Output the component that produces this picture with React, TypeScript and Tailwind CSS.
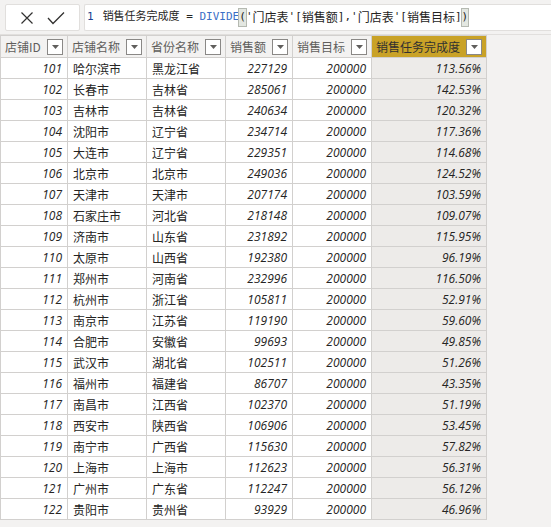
import React from "react";

const rows: [number, string, string, number, string][] = [
  [101, "哈尔滨市", "黑龙江省", 227129, "113.56%"],
  [102, "长春市", "吉林省", 285061, "142.53%"],
  [103, "吉林市", "吉林省", 240634, "120.32%"],
  [104, "沈阳市", "辽宁省", 234714, "117.36%"],
  [105, "大连市", "辽宁省", 229351, "114.68%"],
  [106, "北京市", "北京市", 249036, "124.52%"],
  [107, "天津市", "天津市", 207174, "103.59%"],
  [108, "石家庄市", "河北省", 218148, "109.07%"],
  [109, "济南市", "山东省", 231892, "115.95%"],
  [110, "太原市", "山西省", 192380, "96.19%"],
  [111, "郑州市", "河南省", 232996, "116.50%"],
  [112, "杭州市", "浙江省", 105811, "52.91%"],
  [113, "南京市", "江苏省", 119190, "59.60%"],
  [114, "合肥市", "安徽省", 99693, "49.85%"],
  [115, "武汉市", "湖北省", 102511, "51.26%"],
  [116, "福州市", "福建省", 86707, "43.35%"],
  [117, "南昌市", "江西省", 102370, "51.19%"],
  [118, "西安市", "陕西省", 106906, "53.45%"],
  [119, "南宁市", "广西省", 115630, "57.82%"],
  [120, "上海市", "上海市", 112623, "56.31%"],
  [121, "广州市", "广东省", 112247, "56.12%"],
  [122, "贵阳市", "贵州省", 93929, "46.96%"],
];

const cols = [
  { name: "店铺ID", w: 67 },
  { name: "店铺名称", w: 79 },
  { name: "省份名称", w: 79 },
  { name: "销售额", w: 67 },
  { name: "销售目标", w: 79 },
  { name: "销售任务完成度", w: 115 },
];

function Drop() {
  return (
    <span className="ml-auto flex h-[16px] w-[16px] shrink-0 items-center justify-center border border-[#8a8886] bg-white">
      <svg width="7" height="4" viewBox="0 0 7 4">
        <path d="M0 0H7L3.5 4Z" fill="#605e5c" />
      </svg>
    </span>
  );
}

const num = { fontFamily: '"Open Sans", "Noto Sans", sans-serif' };

export default function App() {
  const font = { fontFamily: '"Noto Sans CJK SC", "Noto Sans", sans-serif' };
  return (
    <div className="h-[527px] w-[551px] overflow-hidden bg-[#f3f2f1]" style={font}>
      <div className="flex h-[34px] items-start gap-[4px] pl-[5px] pt-[4px]">
        <div className="flex h-[27px] w-[75px] items-center justify-around rounded-[2px] border border-[#e1dfdd] bg-white px-[8px]">
          <svg width="14" height="14" viewBox="0 0 14 14">
            <path d="M1.5 1.5L12.5 12.5M12.5 1.5L1.5 12.5" stroke="#323130" strokeWidth="1.2" />
          </svg>
          <svg width="18" height="14" viewBox="0 0 18 14">
            <path d="M1 7L6 12.5L17 1.5" stroke="#323130" strokeWidth="1.3" fill="none" />
          </svg>
        </div>
        <div
          className="flex h-[27px] flex-1 items-center whitespace-pre rounded-l-[2px] border border-r-0 border-[#e1dfdd] bg-white pl-[2px] text-[11px] text-[#252423]"
          style={{ fontFamily: '"DejaVu Sans Mono", "Noto Sans CJK SC", monospace' }}
        >
          <span className="text-[#1b3f91]">1</span>
          <span className="ml-[9px] text-[11px]">销售任务完成度</span>
          <span>{" = "}</span>
          <span className="text-[#3b6fc6]">DIVIDE</span>
          <span className="bg-[#e3e7e1] outline outline-1 outline-[#b5b9b1]">(</span>
          <span>'</span><span className="text-[12px]">门店表</span><span>'[</span><span className="text-[12px]">销售额</span><span>],'</span><span className="text-[12px]">门店表</span><span>'[</span><span className="text-[12px]">销售目标</span><span>]</span>
          <span className="bg-[#e3e7e1] outline outline-1 outline-[#b5b9b1]">)</span>
        </div>
      </div>
      <div className="border-t border-[#e1dfdd]">
        <table className="border-collapse text-[12px] text-[#252423]" style={{ tableLayout: "fixed" }}>
          <colgroup>
            {cols.map((c) => (
              <col key={c.name} style={{ width: c.w }} />
            ))}
          </colgroup>
          <thead>
            <tr className="h-[22px]">
              {cols.map((c, i) => (
                <th
                  key={c.name}
                  className={
                    "border border-[#d2d0ce] px-[4px] py-0 text-left text-[12px] font-normal " +
                    (i === 5 ? "bg-[#c9a227] text-[#323130]" : "bg-[#f3f2f1] text-[#605e5c]")
                  }
                >
                  <div className="flex items-center">
                    <span className="whitespace-nowrap leading-[20px]">{c.name}</span>
                    <Drop />
                  </div>
                </th>
              ))}
            </tr>
          </thead>
          <tbody>
            {rows.map((r) => (
              <tr key={r[0]} className="h-[21px]">
                <td className="border border-[#d2d0ce] bg-white py-0 pr-[5px] text-right italic leading-[19px]" style={num}>{r[0]}</td>
                <td className="border border-[#d2d0ce] bg-white py-0 pl-[5px] leading-[19px]">{r[1]}</td>
                <td className="border border-[#d2d0ce] bg-white py-0 pl-[5px] leading-[19px]">{r[2]}</td>
                <td className="border border-[#d2d0ce] bg-white py-0 pr-[5px] text-right italic leading-[19px]" style={num}>{r[3]}</td>
                <td className="border border-[#d2d0ce] bg-white py-0 pr-[5px] text-right italic leading-[19px]" style={num}>200000</td>
                <td className="border border-[#d2d0ce] bg-[#edebe9] py-0 pr-[5px] text-right italic leading-[19px]" style={num}>{r[4]}</td>
              </tr>
            ))}
          </tbody>
        </table>
      </div>
    </div>
  );
}
